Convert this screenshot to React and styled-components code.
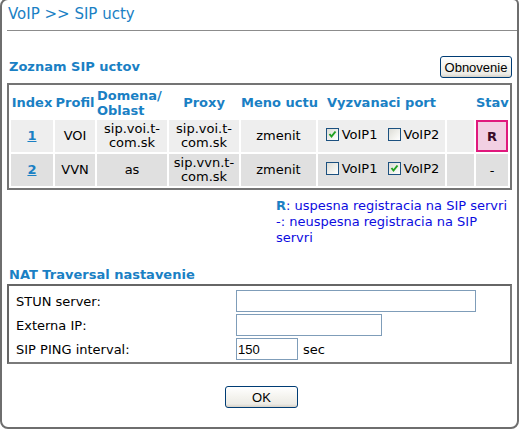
import React from 'react';
import styled, { createGlobalStyle } from 'styled-components';

const Global = createGlobalStyle`
  html, body { margin: 0; padding: 0; background: #fff; }
  body {
    font-family: "DejaVu Sans", Verdana, sans-serif;
    font-size: 13px;
    color: #000;
    overflow: hidden;
  }
`;

const BLUE = '#1a80c4';

const Frame = styled.div`
  box-sizing: border-box;
  width: 519px;
  height: 431px;
  margin-top: -2px;
  border: 2px solid #6e6e6e;
  border-radius: 8px 6px 8px 8px;
  padding: 0 5px;
  display: flex;
  flex-direction: column;
`;

const Title = styled.h1`
  margin: 0 -5px 0 0;
  padding: 5px 0 7px 1px;
  font-size: 15px;
  line-height: 18px;
  font-weight: normal;
  color: ${BLUE};
  border-bottom: 1px solid #8c8c8c;
`;

const SectionHead = styled.div`
  margin-top: 25px;
  height: 22px;
  display: flex;
  align-items: center;
  justify-content: space-between;
`;

const Heading = styled.h2`
  margin: ${p => p.$mt || 0}px 0 0 0;
  padding-left: 2px;
  font-size: 13px;
  line-height: 16px;
  font-weight: bold;
  color: ${BLUE};
`;

const XPButton = styled.button`
  box-sizing: border-box;
  width: ${p => p.$w}px;
  height: 22px;
  padding: 0;
  border: 1px solid #003c74;
  border-radius: 3px;
  background: linear-gradient(#ffffff 0%, #f4f3ee 50%, #ecebe6 85%, #d6d0c5 100%);
  font-family: "Liberation Sans", Arial, sans-serif;
  font-size: 13px;
  color: #000;
`;

const Table = styled.table`
  margin-top: 5px;
  width: 505px;
  table-layout: fixed;
  border-collapse: separate;
  border-spacing: 2px;
  border: 2px solid #747474;
`;

const Th = styled.th`
  box-sizing: border-box;
  width: ${p => p.$w}px;
  height: 31px;
  padding: 0;
  font-size: 13px;
  line-height: 15px;
  font-weight: bold;
  color: ${BLUE};
  text-align: ${p => p.$left ? 'left' : 'center'};
  vertical-align: middle;
  white-space: ${p => p.$left ? 'normal' : 'nowrap'};
`;

const Td = styled.td`
  height: 32px;
  padding: 0;
  background: ${p => p.$bg};
  text-align: center;
  vertical-align: middle;
  line-height: 14px;
`;

const StavCell = styled.td`
  box-sizing: border-box;
  height: 32px;
  padding: 0;
  text-align: center;
  vertical-align: middle;
  background: ${p => p.$ok ? '#f2d0e3' : p.$bg};
  border: ${p => p.$ok ? '2px solid #e0197d' : 'none'};
  font-weight: ${p => p.$ok ? 'bold' : 'normal'};
  color: ${p => p.$ok ? '#3a0a28' : '#000'};
`;

const IndexLink = styled.a`
  color: ${BLUE};
  font-weight: bold;
  text-decoration: underline;
`;

const Ports = styled.span`
  display: inline-flex;
  align-items: center;
  margin-left: 2px;
`;

const PortLabel = styled.span`
  margin: 0 ${p => p.$mr || 0}px 0 3px;
`;

const CheckBox = styled.span`
  box-sizing: border-box;
  display: inline-block;
  width: 13px;
  height: 13px;
  border: 1px solid #1c5180;
  background: linear-gradient(135deg, #dcdcd6 0%, #f2f2ee 60%, #ffffff 100%);
  position: relative;
  svg { position: absolute; left: 0; top: 0; }
`;

const Check = ({ on }) => (
  <CheckBox>
    {on && (
      <svg width="11" height="11" viewBox="0 0 11 11">
        <path d="M2.5 5 L4.5 7.5 L8.5 2.5" fill="none" stroke="#21a121" strokeWidth="2" />
      </svg>
    )}
  </CheckBox>
);

const Legend = styled.div`
  margin: 8px 0 0 auto;
  width: 236px;
  line-height: 16px;
  color: #0c0ce0;
  b { color: ${BLUE}; }
`;

const NatBox = styled.div`
  margin-top: 1px;
  border: 2px solid;
  border-color: #666 #7a7a7a #7a7a7a #666;
  padding: 4px 0 2px 7px;
  display: grid;
  grid-template-columns: 220px auto;
  grid-auto-rows: 22px;
  row-gap: 2px;
  align-items: center;
`;

const FieldRow = styled.div`
  display: flex;
  align-items: center;
`;

const Input = styled.input`
  box-sizing: border-box;
  width: ${p => p.$w}px;
  height: 22px;
  border: 1px solid #7f9db9;
  padding: 0 1px;
  font-family: "Liberation Sans", Arial, sans-serif;
  font-size: 13px;
  color: #000;
  outline: none;
`;

const Unit = styled.span`
  margin-left: 5px;
`;

const Footer = styled.div`
  margin-top: 22px;
  display: flex;
  justify-content: center;
  padding-left: 4px;
`;

const rows = [
  { idx: 1, profil: 'VOI', dom: 'sip.voi.t-com.sk', proxy: 'sip.voi.t-com.sk', p1: true, p2: false, ok: true, bg: '#eeeeee' },
  { idx: 2, profil: 'VVN', dom: 'as', proxy: 'sip.vvn.t-com.sk', p1: false, p2: true, ok: false, bg: '#e0e0e0' },
];

export default function App() {
  return (
    <>
      <Global />
      <Frame>
        <Title>VoIP &gt;&gt; SIP ucty</Title>
        <SectionHead>
          <Heading>Zoznam SIP uctov</Heading>
          <XPButton $w={72}>Obnovenie</XPButton>
        </SectionHead>
        <Table>
          <thead>
            <tr>
              <Th $w={42}>Index</Th>
              <Th $w={40}>Profil</Th>
              <Th $w={70} $left>Domena/<br />Oblast</Th>
              <Th $w={70}>Proxy</Th>
              <Th $w={75}>Meno uctu</Th>
              <Th $w={127}>Vyzvanaci port</Th>
              <Th $w={27}></Th>
              <Th $w={32}>Stav</Th>
            </tr>
          </thead>
          <tbody>
            {rows.map(r => (
              <tr key={r.idx}>
                <Td $bg={r.bg}><IndexLink href="#">{r.idx}</IndexLink></Td>
                <Td $bg={r.bg}>{r.profil}</Td>
                <Td $bg={r.bg}>{r.dom}</Td>
                <Td $bg={r.bg}>{r.proxy}</Td>
                <Td $bg={r.bg}>zmenit</Td>
                <Td $bg={r.bg}>
                  <Ports>
                    <Check on={r.p1} /><PortLabel $mr={10}>VoIP1</PortLabel>
                    <Check on={r.p2} /><PortLabel>VoIP2</PortLabel>
                  </Ports>
                </Td>
                <Td $bg={r.bg}></Td>
                <StavCell $ok={r.ok} $bg={r.bg}>{r.ok ? 'R' : '-'}</StavCell>
              </tr>
            ))}
          </tbody>
        </Table>
        <Legend>
          <b>R</b>: uspesna registracia na SIP servri<br />
          -: neuspesna registracia na SIP servri
        </Legend>
        <Heading $mt={21}>NAT Traversal nastavenie</Heading>
        <NatBox>
          <span>STUN server:</span>
          <FieldRow><Input $w={240} defaultValue="" /></FieldRow>
          <span>Externa IP:</span>
          <FieldRow><Input $w={146} defaultValue="" /></FieldRow>
          <span>SIP PING interval:</span>
          <FieldRow><Input $w={62} defaultValue="150" /><Unit>sec</Unit></FieldRow>
        </NatBox>
        <Footer>
          <XPButton $w={73}>OK</XPButton>
        </Footer>
      </Frame>
    </>
  );
}
